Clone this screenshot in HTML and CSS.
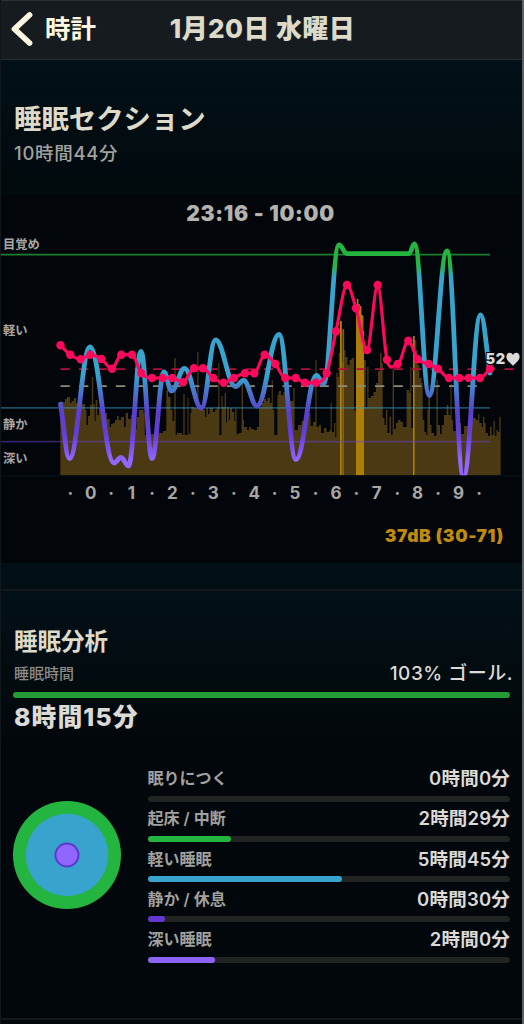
FILE: index.html
```
<!DOCTYPE html>
<html lang="ja">
<head>
    <meta charset="UTF-8">
    <meta name="viewport" content="width=device-width, initial-scale=1.0">
    <title>睡眠セクション</title>
    <link rel="stylesheet" href="styles.css">
</head>
<body>
    <div class="app">
        <header class="navbar">
            <button class="back">
                <svg width="22" height="36" viewBox="0 0 22 36"><path d="M18.5 4L3.5 18L18.5 32"/></svg>
                <span>時計</span>
            </button>
            <h1>1月20日 水曜日</h1>
        </header>

        <section class="session">
            <h2>睡眠セクション</h2>
            <p class="total">10時間44分</p>
            <p class="range">23:16 - 10:00</p>

            <svg class="chart" width="524" height="250" viewBox="0 230 524 250">
                <defs>
                    <linearGradient id="depth" gradientUnits="userSpaceOnUse" x1="0" y1="230" x2="0" y2="480">
                        <stop offset="0.14" stop-color="#24b541"/>
                        <stop offset="0.19" stop-color="#38a3cd"/>
                        <stop offset="0.58" stop-color="#38a3cd"/>
                        <stop offset="0.73" stop-color="#5b3fcc"/>
                        <stop offset="0.82" stop-color="#6440d6"/>
                        <stop offset="0.92" stop-color="#9066ff"/>
                    </linearGradient>
                    <clipPath id="plot"><rect x="0" y="230" width="524" height="245.3"/></clipPath>
                </defs>
                <path id="noise" class="noise"/>
                <path class="loud" d="M340 475.3V321h1.8V475.3zM342.6 475.3V329h1V475.3zM356 475.3V312h.8V299h1.6V304h1.4V475.3zM359.8 475.3V306h1.6V315h1.4V331h1.2V475.3zM413 475.3V336h1.6V475.3z"/>
                <path class="base" d="M0 475.8H522"/>
                <path class="level awake" d="M0 254.7H490"/>
                <path class="level light" d="M0 407.8H490"/>
                <path class="level deep" d="M0 441.6H490"/>
                <path class="dash avg" d="M60.5 386.2H482"/>
                <path class="dash pulse" d="M60.5 369.2H515"/>
                <path id="sleep" class="sleep" clip-path="url(#plot)"/>
                <path id="heart" class="heart"/>
                <g id="dots" class="dots"></g>
                <g class="levels">
                    <text x="3" y="249">目覚め</text>
                    <text x="3" y="335">軽い</text>
                    <text x="3" y="429">静か</text>
                    <text x="3" y="463">深い</text>
                </g>
                <text class="bpm" x="485.5" y="364">52</text>
                <path class="bpm-icon" d="M513 365.7C509 362 506.4 360 506.4 357C506.4 352.2 511.3 351.6 513 355C514.7 351.6 519.6 352.2 519.6 357C519.6 360 517 362 513 365.7z"/>
            </svg>

            <div class="hours">
                <i>·</i><i>0</i><i>·</i><i>1</i><i>·</i><i>2</i><i>·</i><i>3</i><i>·</i><i>4</i><i>·</i><i>5</i><i>·</i><i>6</i><i>·</i><i>7</i><i>·</i><i>8</i><i>·</i><i>9</i><i>·</i>
            </div>
            <p class="db">37dB (30-71)</p>
        </section>

        <section class="analysis">
            <h2>睡眠分析</h2>
            <div class="goal">
                <span class="goal-name">睡眠時間</span>
                <span class="goal-value">103% ゴール.</span>
            </div>
            <div class="goal-bar"></div>
            <p class="slept">8時間15分</p>

            <div class="breakdown">
                <svg class="rings" width="108" height="108" viewBox="0 0 108 108">
                    <circle cx="54" cy="54" r="54" fill="#24b541"/>
                    <circle cx="54" cy="54" r="41.2" fill="#38a3cd"/>
                    <circle cx="54" cy="54" r="12.5" fill="#5b38cc"/>
                    <circle cx="54" cy="54" r="10.6" fill="#9066ff"/>
                </svg>
                <ul class="stages">
                    <li>
                        <div class="stage"><span>眠りにつく</span><b>0時間0分</b></div>
                        <div class="track"></div>
                    </li>
                    <li>
                        <div class="stage"><span>起床 / 中断</span><b>2時間29分</b></div>
                        <div class="track"><div class="fill green" style="width: 23.1%"></div></div>
                    </li>
                    <li>
                        <div class="stage"><span>軽い睡眠</span><b>5時間45分</b></div>
                        <div class="track"><div class="fill blue" style="width: 53.7%"></div></div>
                    </li>
                    <li>
                        <div class="stage"><span>静か / 休息</span><b>0時間30分</b></div>
                        <div class="track"><div class="fill indigo" style="width: 4.9%"></div></div>
                    </li>
                    <li>
                        <div class="stage"><span>深い睡眠</span><b>2時間0分</b></div>
                        <div class="track"><div class="fill violet" style="width: 18.6%"></div></div>
                    </li>
                </ul>
            </div>
        </section>
    </div>

    <script>
        const sleep = [
            [60.5, 404], [69.5, 458.5], [90, 347], [114, 463], [121, 457.5], [128.5, 466],
            [141, 351.5], [152, 458.5], [164, 372], [171.5, 391], [184.5, 368.5], [201.5, 408],
            [215.5, 340], [235.5, 386.5], [243.5, 380.5], [257, 406], [279, 334.5], [296, 459.5],
            [316.5, 375.5], [323.5, 384], [339, 245], [347, 253.6], [409, 253.6], [414.5, 244],
            [429.3, 395.5], [447, 251], [463.5, 477], [480.5, 315], [490, 373]
        ];

        const heart = [
            [60.5, 345.3], [70.3, 354.8], [80.7, 359.3], [90.3, 354.8], [101.3, 359], [112, 368.7],
            [121.3, 354.7], [132, 354.7], [141.3, 373.3], [152, 378], [162.7, 378], [172.3, 378],
            [183, 382.3], [194, 368.3], [203, 368.3], [213.3, 378], [223.7, 382.7], [234, 378],
            [245, 373.3], [254.3, 373.3], [264.7, 354.7], [275.3, 364], [285.3, 378], [295.7, 378],
            [305, 382.7], [316, 382.7], [326.7, 373.3], [336, 331.3], [347, 285], [356, 308.3],
            [367, 350], [377.7, 285], [387, 359.7], [397.7, 364], [408.3, 340.7], [417.7, 359.3],
            [428.7, 364], [438, 368.7], [449, 378], [459.3, 378], [468.7, 378], [480, 378], [490, 368.7]
        ];

        // left edge of each noise bar and its top
        const noise = [
            60.3,404, 62,402, 65,399, 67,397, 70,403, 71.5,401, 74,398, 76,403, 78,401, 82,404, 85,410,
            86.5,425, 88,416, 90,405, 91.8,377, 93.2,404, 94.7,421, 95.7,400, 97.3,415, 99,408, 103,413,
            107,419, 109.7,427, 111,424, 113,423, 115,420, 117,416, 118.7,420, 121,417, 124,427,
            125.7,413, 128,419, 131,415, 134,429, 136.5,417, 139,410, 143.5,413, 144.7,435, 151,434,
            154,432, 159,433, 163,431, 166.3,390, 168,397, 170.5,410, 172.5,421, 174.3,358, 175.7,435,
            177,433, 182,435, 183.3,394, 184.7,435, 187.5,398, 188.5,434, 190.3,413, 191.3,407,
            194,408, 197.2,352, 198.5,405, 202,410, 205,417, 206.3,408, 208,414, 209.5,408, 213,412,
            215,410, 216.7,407, 218.3,363, 219.4,435, 221.5,396, 222.7,407, 224.7,393, 226,422,
            227,407, 229,420, 230,408, 232,412, 234.3,421, 235.2,409, 236.6,434, 239,433, 241.6,380,
            243,420, 244,427, 247,430, 249,427, 251,429, 254,430, 257,427, 259,407, 261.5,403,
            264,399, 266,401, 267.5,398, 270,403, 271.7,380, 272.8,410, 274.2,435, 277.4,395,
            278.6,391, 281,395, 283.5,392, 286,397, 289,401, 293.3,388, 294.6,430, 298,425, 301.5,421,
            304,423, 306.3,415, 309,413, 310.5,426, 313,422, 315.4,360, 316.6,427, 319,425, 321,433,
            324,428, 326.5,432, 329.5,430, 330.6,403, 331.8,432, 334,423, 335.3,437, 336.3,373,
            337.6,377, 338.8,353, 340,321, 341.8,362, 342.7,329, 344.3,350, 345.4,357, 347.5,365,
            349.5,360, 351.5,358, 354,410, 355.5,412, 356,316, 364,360, 365.8,407, 367.2,367,
            368.5,398, 371,396, 373.5,392, 376,383, 378,371, 380,353, 381.6,363, 382.7,418,
            384.5,425, 386,410, 387.4,433, 389.5,417, 391,435, 392.6,370, 394,429, 396,423,
            398,420, 400.5,422, 403,427, 406.6,390, 409.3,393, 410.2,367, 411.3,428, 413,336,
            414.7,340, 416.3,350, 417.6,365, 419.3,378, 421.5,383, 422.7,420, 424.4,432, 426.3,435,
            427.4,410, 428.4,390, 430,425, 431.5,433, 434,436, 436.4,380, 437.8,425, 440,434,
            441.7,425, 444,415, 446.6,405, 448.4,415, 450.5,384, 451.6,420, 453,431, 456,423,
            461,434, 464,426, 468,422, 472,418, 476,420, 478.2,414, 479.4,423, 481.8,427,
            483,417, 484.4,423, 485.6,433, 488,436, 490,427, 491.6,435, 493.5,421, 494.8,436,
            496.4,430, 498,432, 499.3,417
        ];

        // flat at the peaks, sloped through the points in between
        function smooth(points, pull) {
            let slopes = points.map((p, i) => {
                let a = points[i - 1], b = points[i + 1];
                if (!a || !b) {
                    let near = a || b;
                    return (near[1] - p[1]) / (near[0] - p[0]);
                }
                if ((p[1] - a[1]) * (b[1] - p[1]) <= 0) return 0;
                return (b[1] - a[1]) / (b[0] - a[0]);
            });
            let d = 'M' + points[0];
            for (let i = 1; i < points.length; i++) {
                let a = points[i - 1], b = points[i];
                let step = (b[0] - a[0]) * pull;
                d += 'C' + [a[0] + step, a[1] + slopes[i - 1] * step, b[0] - step, b[1] - slopes[i] * step, b[0], b[1]];
            }
            return d;
        }

        let area = 'M60.3 475.3';
        for (let i = 0; i < noise.length; i += 2) {
            area += 'H' + noise[i] + 'V' + noise[i + 1];
        }
        document.getElementById('noise').setAttribute('d', area + 'H500.7V475.3z');
        document.getElementById('sleep').setAttribute('d', smooth(sleep, 0.4));
        document.getElementById('heart').setAttribute('d', smooth(heart, 0.33));
        document.getElementById('dots').innerHTML = heart.map(p => `<circle cx="${p[0]}" cy="${p[1]}" r="4.2"/>`).join('');
    </script>
</body>
</html>
```
FILE: styles.css
```
* {
    box-sizing: border-box;
    margin: 0;
    padding: 0;
}

body {
    background: #02070c;
    color: #dcdad6;
    font-family: Inter, "Noto Sans CJK JP", sans-serif;
}

.app {
    width: 524px;
    height: 1024px;
    overflow: hidden;
    border-left: 1px solid #10181c;
    border-right: 2px solid #5c6164;
    background: #02070c;
}

.navbar {
    height: 60px;
    display: grid;
    grid-template-columns: 1fr auto 1fr;
    align-items: center;
    padding: 0 2px 3px 10px;
    background: #161b1f;
    border-top: 1px solid #2b3236;
    border-bottom: 1px solid #252b2e;
}

.navbar h1 {
    margin-left: -6px;
    font-size: 26px;
    font-weight: 800;
    line-height: 36px;
    letter-spacing: .4px;
    color: #dddac9;
    white-space: nowrap;
}

.back {
    display: flex;
    align-items: center;
    gap: 12px;
    border: none;
    background: none;
    color: #fbf6df;
    font: 700 25.5px/36px Inter, "Noto Sans CJK JP", sans-serif;
}

.back path {
    fill: none;
    stroke: #fbf6df;
    stroke-width: 5.8;
    stroke-linecap: round;
    stroke-linejoin: round;
}

.session {
    height: 531px;
    padding-top: 43px;
    background: linear-gradient(#021017 0, #010a0d 134px, #02060b 136px, #02060b 503px, #020f14 503px);
    border-bottom: 2px solid #12191c;
}

.session h2 {
    padding-left: 13px;
    font-size: 27.4px;
    line-height: 32px;
    color: #dddac9;
}

.total {
    margin-top: 6px;
    padding-left: 13px;
    font-size: 18.5px;
    font-weight: 500;
    line-height: 24px;
    letter-spacing: .7px;
    color: #a3a19e;
}

.range {
    margin-top: 37px;
    padding-right: 2px;
    text-align: center;
    font-size: 21px;
    font-weight: 900;
    line-height: 24px;
    letter-spacing: .7px;
    color: #b5b3ae;
}

/* the plot runs under the side edges of the page */
.chart {
    display: block;
    margin: 4px 0 0 -1px;
}

.noise {
    fill: #4a3912;
}

.loud {
    fill: #ac7d0b;
}

.base {
    stroke: #0c1216;
}

.level {
    stroke-width: 1.7;
}

.awake {
    stroke: #1a8030;
}

.light {
    stroke: #38a3cd;
    stroke-opacity: .45;
}

.deep {
    stroke: #6c45d0;
    stroke-opacity: .45;
}

.dash {
    stroke-width: 1.8;
    stroke-dasharray: 9.3 9.2;
}

.avg {
    stroke: #8e8a76;
}

.pulse {
    stroke: #b3103f;
}

.sleep {
    fill: none;
    stroke: url(#depth);
    stroke-width: 4.8;
    stroke-linecap: round;
    stroke-linejoin: round;
}

.heart {
    fill: none;
    stroke: #fb0a5c;
    stroke-width: 3.2;
}

.dots {
    fill: #fb0a5c;
}

.levels {
    fill: #a9a7a4;
    font-size: 12.3px;
    font-weight: 600;
}

.bpm {
    fill: #dcdad6;
    stroke: #02060b;
    stroke-width: 2;
    paint-order: stroke;
    font-size: 14.5px;
    font-weight: 900;
    letter-spacing: .6px;
}

.bpm-icon {
    fill: #dcdad6;
}

.hours {
    display: flex;
    padding-left: 59px;
}

.hours i {
    width: 20.45px;
    text-align: center;
    font-size: 17px;
    font-style: normal;
    font-weight: 700;
    line-height: 26px;
    color: #a9a7a4;
}

.db {
    margin-top: 18px;
    padding-right: 18px;
    text-align: right;
    font-size: 17.5px;
    font-weight: 900;
    line-height: 24px;
    letter-spacing: .6px;
    color: #c08a10;
}

.analysis {
    height: 429px;
    padding: 37px 12px 0 12px;
    background: linear-gradient(#021017 0, #020b0e 100px, #02070b 150px);
    border-bottom: 2px solid #12191c;
}

.analysis h2 {
    padding-left: 1px;
    font-size: 23.5px;
    line-height: 28px;
    color: #dddac9;
}

.goal {
    margin-top: 5px;
    display: flex;
    justify-content: space-between;
    align-items: center;
    line-height: 26px;
}

.goal-name {
    padding-left: 1px;
    font-size: 15px;
    font-weight: 500;
    color: #8d8b88;
}

.goal-value {
    margin-right: -3px;
    font-size: 19px;
    font-weight: 500;
    letter-spacing: .5px;
}

.goal-bar {
    height: 6px;
    margin-top: 5px;
    border-radius: 3px;
    background: #249c35;
}

.slept {
    margin-top: 3px;
    padding-left: 1px;
    font-size: 24.8px;
    font-weight: 800;
    line-height: 32px;
    letter-spacing: 1.1px;
}

.breakdown {
    margin-top: 32px;
    display: flex;
    gap: 26.5px;
}

.rings {
    margin-top: 36px;
}

.stages {
    flex: 1;
    list-style: none;
}

.stages li {
    height: 40.3px;
}

.stage {
    display: flex;
    justify-content: space-between;
    line-height: 26px;
}

.stage span {
    font-size: 16px;
    font-weight: 600;
    color: #a3a19e;
}

.stage b {
    font-size: 18.5px;
    font-weight: 600;
    letter-spacing: .2px;
}

.track {
    height: 6px;
    margin-top: 4.5px;
    border-radius: 3px;
    background: #222323;
}

.fill {
    height: 6px;
    border-radius: 3px;
}

.fill.green {
    background: #24b541;
}

.fill.blue {
    background: #38a3cd;
}

.fill.indigo {
    background: #6338d0;
}

.fill.violet {
    background: #8e63f8;
}
```
